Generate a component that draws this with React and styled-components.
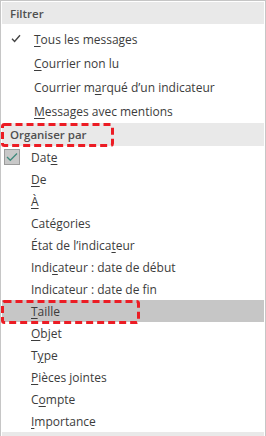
import React from 'react';
import styled, { createGlobalStyle } from 'styled-components';

const GlobalStyle = createGlobalStyle`
  html, body {
    margin: 0;
    padding: 0;
    background: #ffffff;
  }
  body {
    font-family: "Open Sans", "Noto Sans", sans-serif;
  }
`;

// Outer menu panel
const Panel = styled.div`
  width: 266px;
  height: 436px;
  box-sizing: border-box;
  border: 1px solid #c6c6c6;
  border-bottom: none;
  padding: 1px 1px 0;
  overflow: hidden;
  background: #fff;
  display: flex;
  flex-direction: column;
`;

const SectionHeader = styled.div`
  position: relative;
  flex: none;
  height: ${(p) => p.$h || 22}px;
  background: #e9e9e9;
  display: flex;
  align-items: center;
  padding-left: 8px;
  font-size: 11.5px;
  font-weight: 600;
  color: #505050;
`;

const Section = styled.div`
  display: flex;
  flex-direction: column;
  padding-top: ${(p) => p.$gap || 0}px;
  flex: none;
`;

const Row = styled.div`
  position: relative;
  height: ${(p) => p.$h}px;
  display: flex;
  align-items: center;
  padding-left: ${(p) => p.$indent}px;
  font-size: 12px;
  color: #3c3c3c;
  background: ${(p) => (p.$active ? '#c6c6c6' : 'transparent')};
  white-space: nowrap;
`;

const Key = styled.span`
  text-decoration: underline;
  text-underline-offset: 2px;
`;

const Tick = styled.svg`
  position: absolute;
  left: 9px;
  top: 50%;
  margin-top: -5px;
`;

const CheckBox = styled.span`
  position: absolute;
  left: 2px;
  top: 50%;
  margin-top: -8px;
  width: 16px;
  height: 16px;
  box-sizing: border-box;
  background: #c8c8c8;
  border: 1px solid #9b9b9b;
  display: flex;
  align-items: center;
  justify-content: center;
`;

// Red dashed annotation drawn over an item
const Marker = styled.svg`
  position: absolute;
  left: ${(p) => p.$left}px;
  top: ${(p) => p.$top}px;
  pointer-events: none;
  overflow: visible;
`;

const Dashed = ({ left, top, w, h }) => (
  <Marker $left={left} $top={top} width={w} height={h}>
    <rect
      x="1.5"
      y="1.5"
      width={w - 3}
      height={h - 3}
      rx="2"
      fill="none"
      stroke="#ec1c24"
      strokeWidth="3"
      strokeDasharray="7 4"
    />
  </Marker>
);

// label with mnemonic letter at index k
const Label = ({ text, k }) => (
  <span>
    {text.slice(0, k)}
    <Key>{text.slice(k, k + 1)}</Key>
    {text.slice(k + 1)}
  </span>
);

const filters = [
  { text: 'Tous les messages', k: 0, checked: true },
  { text: 'Courrier non lu', k: 0 },
  { text: 'Courrier marqué d’un indicateur', k: 10 },
  { text: 'Messages avec mentions', k: 0 },
];

const sorts = [
  { text: 'Date', k: 3, checked: true },
  { text: 'De', k: 0 },
  { text: 'À', k: 0 },
  { text: 'Catégories', k: 4 },
  { text: 'État de l’indicateur', k: 16 },
  { text: 'Indicateur : date de début', k: 4 },
  { text: 'Indicateur : date de fin', k: 22 },
  { text: 'Taille', k: 0, active: true },
  { text: 'Objet', k: 0 },
  { text: 'Type', k: 1 },
  { text: 'Pièces jointes', k: 0 },
  { text: 'Compte', k: 1 },
  { text: 'Importance', k: 0 },
];

const App = () => {
  return (
    <>
      <GlobalStyle />
      <Panel>
        <SectionHeader $h={22}>Filtrer</SectionHeader>
        <Section $gap={3}>
          {filters.map((f, i) => (
            <Row key={i} $h={24} $indent={32}>
              {f.checked && (
                <Tick width="10" height="9" viewBox="0 0 10 9">
                  <path d="M1 4.8 L3.6 7.4 L9 1.2" fill="none" stroke="#444" strokeWidth="1.4" />
                </Tick>
              )}
              <Label text={f.text} k={f.k} />
            </Row>
          ))}
        </Section>
        <SectionHeader $h={23}>
          Organiser par
          <Dashed left={-1} top={0} w={113} h={24} />
        </SectionHeader>
        <Section>
          {sorts.map((s, i) => (
            <Row key={i} $h={22} $indent={29} $active={s.active}>
              {s.checked && (
                <CheckBox>
                  <svg width="12" height="10" viewBox="0 0 12 10">
                    <path d="M1 5 L4.3 8.3 L11 1.5" fill="none" stroke="#3f8a7c" strokeWidth="1.3" />
                  </svg>
                </CheckBox>
              )}
              <Label text={s.text} k={s.k} />
              {s.active && <Dashed left={-1} top={0} w={139} h={24} />}
            </Row>
          ))}
        </Section>
        <SectionHeader $h={8} />
      </Panel>
    </>
  );
};

export default App;
